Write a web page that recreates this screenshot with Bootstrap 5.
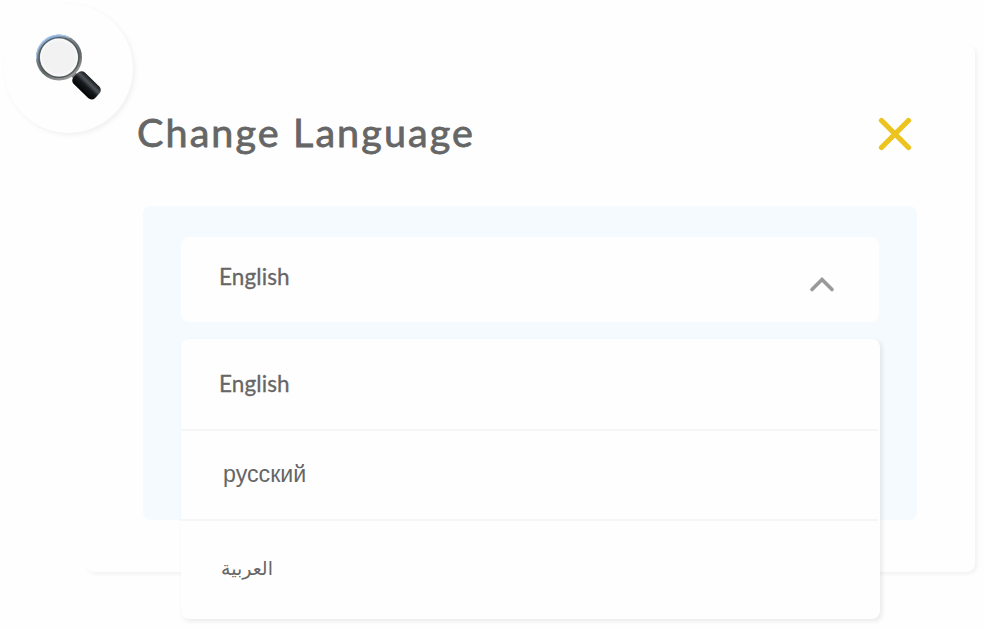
<!DOCTYPE html>
<html lang="en">
<head>
<meta charset="utf-8">
<meta name="viewport" content="width=device-width, initial-scale=1">
<title>Change Language</title>
<link href="https://cdn.jsdelivr.net/npm/bootstrap@5.3.0/dist/css/bootstrap.min.css" rel="stylesheet">
<style>
body{background:#fefefe;color:#666;font-family:Lato,"Liberation Sans",sans-serif;height:628px;overflow:hidden}
.dialog-box{margin:45px 0 0 86px;width:889px;height:527px;border-radius:8px;background:#fefefe;box-shadow:2px 2px 4px rgba(0,0,0,.055);padding:61px 58px 0 51px}
.dialog-head{height:56px;padding-right:5px}
.dialog-title{font-size:39.5px;line-height:51px;-webkit-text-stroke:.8px #666;white-space:nowrap;letter-spacing:2.1px}
.close-btn{width:34px;height:34px;margin-top:11px}
.lang-panel{margin:44px 0 0 6px;width:774px;height:313.5px;border-radius:8px;background:#f4fafe;padding:30.5px 38px 0}
.lang-select{width:698px;height:85.5px;border-radius:8px;background:#fefefe;padding:0 44px 0 38px;border:0;color:#666}
.lang-name{font-size:22.5px;line-height:28px;letter-spacing:.1px;-webkit-text-stroke:.3px #666}
.lang-select .lang-name{margin-top:-4px}
.lang-select svg{margin-top:10px}
.lang-menu{margin-top:17px;width:699px;height:280px;border-radius:8px;background:#fefefe;box-shadow:2px 2px 5px rgba(0,0,0,.09)}
.lang-item{padding-left:38px;color:#666;height:90px;border-bottom:2px solid #f5f6f6;margin-right:2px}
.lang-item.first-item{height:92px}
.lang-item.last-item{height:98px;border:0;padding-bottom:5px}
.ru-name{font:23.2px/28px "Liberation Sans",sans-serif;margin:-3px 0 0 4px}
.ar-name{font:19px/28px "DejaVu Sans",sans-serif;margin-left:2px}
.search-badge{left:4px;top:4px;width:129px;height:129px;background:#fefefe;box-shadow:2px 2px 5px rgba(0,0,0,.06)}
</style>
<script src="https://cdn.jsdelivr.net/npm/bootstrap@5.3.0/dist/js/bootstrap.bundle.min.js"></script>
</head>
<body class="position-relative d-flex align-items-start">
<main class="dialog-box flex-shrink-0">
  <header class="dialog-head d-flex justify-content-between">
    <h1 class="dialog-title fw-normal m-0">Change Language</h1>
    <button class="close-btn btn p-0 border-0 d-flex" aria-label="Close">
      <svg width="34" height="34" viewBox="0 0 34 34" fill="none" stroke="#edc31d" stroke-width="5.300" stroke-linecap="round"><path d="M3.500 3.500l27 27M30.500 3.500l-27 27"/></svg>
    </button>
  </header>
  <section class="lang-panel">
    <button class="lang-select d-flex align-items-center justify-content-between">
      <span class="lang-name">English</span>
      <svg width="26" height="18" viewBox="0 0 26 18" fill="none" stroke="#999" stroke-width="3.600" stroke-linecap="round"><path d="M3 14.500L13 4.500l10 10"/></svg>
    </button>
    <div class="lang-menu position-relative">
      <div class="lang-item first-item d-flex align-items-center"><span class="lang-name">English</span></div>
      <div class="lang-item d-flex align-items-center"><span class="ru-name" lang="ru">русский</span></div>
      <div class="lang-item last-item d-flex align-items-center"><span class="ar-name" lang="ar" dir="rtl">العربية</span></div>
    </div>
  </section>
</main>
<div class="search-badge rounded-circle position-absolute">
<svg width="129" height="129" viewBox="4 4 129 129">
  <defs>
    <linearGradient id="rim" x1=".2" y1="0" x2=".7" y2="1"><stop offset="0" stop-color="#8eb6e8"/><stop offset=".25" stop-color="#7d878f"/><stop offset=".65" stop-color="#626769"/><stop offset="1" stop-color="#999"/></linearGradient>
    <linearGradient id="grip" x1="0" y1="0" x2="0" y2="1"><stop offset="0" stop-color="#16191c"/><stop offset=".3" stop-color="#50565b"/><stop offset=".55" stop-color="#171a1d"/><stop offset="1" stop-color="#030405"/></linearGradient>
    <radialGradient id="glass"><stop offset=".75" stop-color="#f2f2f3"/><stop offset="1" stop-color="#fff"/></radialGradient>
  </defs>
  <path d="M73 74l4 4" stroke="#777" stroke-width="6"/>
  <circle cx="59" cy="57.500" r="21" fill="url(#glass)" stroke="url(#rim)" stroke-width="4"/>
  <circle cx="59" cy="57.500" r="20" fill="none" stroke="#50585a" stroke-width="1.200"/>
  <circle cx="59" cy="57.500" r="22.500" fill="none" stroke="#a9c8ee" stroke-width="1" stroke-dasharray="48 94" transform="rotate(176 59 57.500)"/>
  <rect x="-15" y="-8" width="30" height="16" rx="5" fill="url(#grip)" transform="translate(86.500 85.300) rotate(44)"/>
</svg>
</div>
</body>
</html>
